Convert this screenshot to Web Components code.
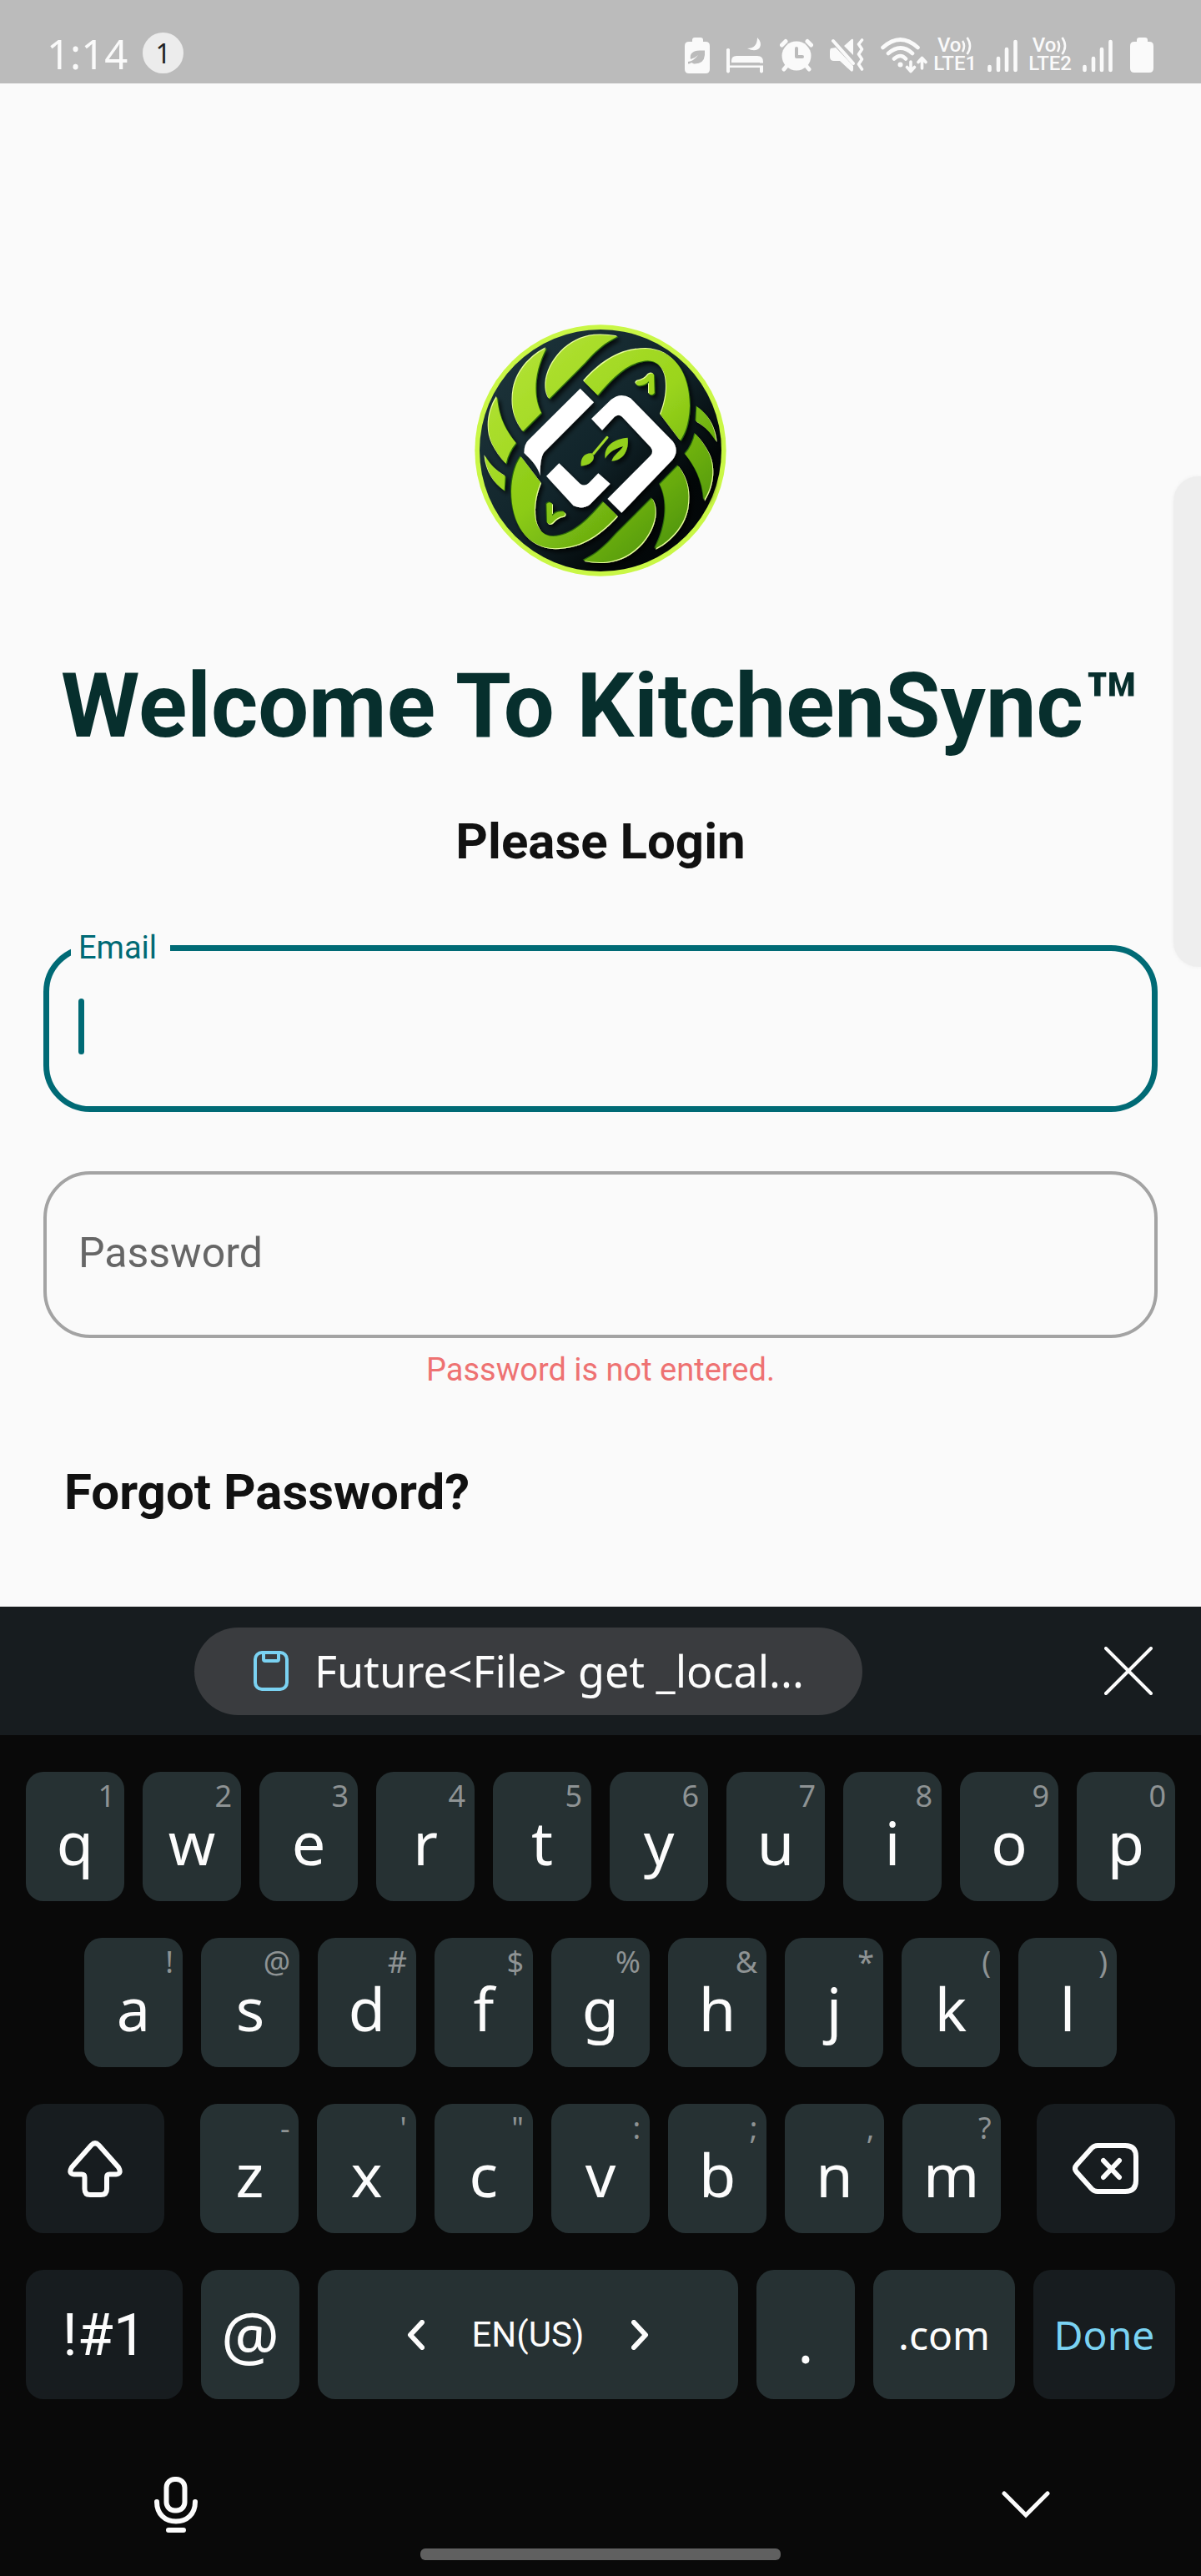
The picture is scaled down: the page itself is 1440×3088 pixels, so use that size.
<!DOCTYPE html>
<html lang="en">
<head>
<meta charset="utf-8">
<meta name="viewport" content="width=device-width, initial-scale=1">
<title>KitchenSync – Login</title>
<style>
  body { margin: 0; background: #fafafa; font-family: Roboto, "Liberation Sans", sans-serif; }
</style>
</head>
<body>
<login-screen></login-screen>

<script>
const define = (name, html, setup) => {
  const tpl = document.createElement('template');
  tpl.innerHTML = html;
  customElements.define(name, class extends HTMLElement {
    connectedCallback() {
      if (this.shadowRoot) return;
      const root = this.attachShadow({ mode: 'open' });
      root.append(tpl.content.cloneNode(true));
      if (setup) setup(this, root);
    }
  });
};

/* Network badge: VoLTE text plus a four-bar signal meter */
define('network-signal', `
<style>
  :host { display: flex; gap: 13px; align-items: flex-end; color: #fafafa; }
  .lte { font: 500 24px/23px Roboto, sans-serif; text-align: center; }
  .vo { display: flex; justify-content: center; align-items: center; gap: 1px; height: 21px; line-height: 21px; }
  svg { display: block; }
</style>
<div class="lte">
  <div class="vo"><span>Vo</span><svg width="13" height="22" viewBox="0 0 13 22" fill="none" stroke="currentColor" stroke-width="2.6"><path d="M1 5Q5 11 1 18M6.500 1Q13.500 11 6.500 21"/></svg></div>
  <div class="name"></div>
</div>
<svg width="36" height="42" viewBox="0 0 36 42" stroke="currentColor" stroke-width="4.6" stroke-linecap="round"><path d="M2.500 34V38M13 24V38M23 13V38M33.500 4V38"/></svg>
`, (el, root) => { root.querySelector('.name').textContent = el.getAttribute('label'); });

define('status-bar', `
<style>
  :host { display: flex; justify-content: space-between; align-items: flex-end; height: 100px; box-sizing: border-box; padding: 0 57px 12px 56px; background: #bbb; color: #fafafa; font-family: "Noto Sans", sans-serif; }
  .left, .right, .icons { display: flex; align-items: center; }
  .left { gap: 18px; }
  time { font-size: 49px; line-height: 46px; }
  .count { width: 49px; height: 49px; border-radius: 50%; background: #ececec; color: #222; font-size: 32px; line-height: 49px; text-align: center; }
  .icons { gap: 20px; }
  .right { gap: 7px; }
  .nets { display: flex; gap: 13px; }
  .batt { margin-left: 14px; }
  svg { display: block; }
</style>
<div class="left"><time>1:14</time><span class="count">1</span></div>
<div class="right">
  <div class="icons">
    <svg width="30" height="43" viewBox="0 0 30 43" fill="currentColor"><path d="M9 5V3q0-3 3-3h7q3 0 3 3v2h3q5 0 5 5v28q0 5-5 5H5q-5 0-5-5V10q0-5 5-5z"/><path fill="#bbb" d="M24 15.500V21Q23 32 11 31.500L8 30Q6 31.500 4 31.500V29Q11 28 16 21Q12 25 7 26Q5 16 18 15.500Z"/></svg>
    <svg width="44" height="43" viewBox="0 0 44 43" fill="currentColor"><path d="M0 14q2-2 4 0v18h36V30H6V28q0-6 6-6h25q7 0 7 7v12q-2 3-4 0v-5H4v5q-2 3-4 0z"/><path fill="#bbb" d="M4 30.500h40v3H4z"/><path d="M37 0q6 6 3 12-5 6-15 1 12 0 12-13z"/></svg>
    <svg width="40" height="40" viewBox="0 0 40 40"><g stroke="currentColor" stroke-width="5" stroke-linecap="round"><path d="M2.500 8 7 3.500M37.500 8 33 3.500M5 37l5-6M35 37l-5-6"/></g><circle cx="20" cy="21" r="17.500" fill="currentColor"/><path d="M20 12v10h7" fill="none" stroke="#bbb" stroke-width="4" stroke-linecap="round" stroke-linejoin="round"/></svg>
    <svg width="41" height="40" viewBox="0 0 41 40" fill="currentColor"><path d="M1 12l6-1 21 22v5q-1 3-3 1L12 27H5q-5 0-5-5v-6q0-3 1-4zM17 9 26 1q2-1 2 1v18z"/><path d="M4 3 28 30" stroke="currentColor" stroke-width="4" stroke-linecap="round"/><path fill="none" stroke="currentColor" stroke-width="3.600" stroke-linecap="round" stroke-linejoin="round" d="M38.500 2l-4 5 4 6-4 6 4 6-4 6 4 6"/></svg>
    <svg width="56" height="43" viewBox="0 0 56 43" fill="none" stroke="currentColor" stroke-width="4.600" stroke-linecap="round" stroke-linejoin="round"><path d="M2.500 12q21-19 42 0M9 19q15-13 29 0M16 25.500q8-7 14 0"/><circle cx="23.500" cy="32.500" r="3" fill="currentColor" stroke="none"/><path stroke-width="3.600" d="M36 29v11m-4.500-4.500L36 40.500l4.500-5M49.500 37V26M45 29.500l4.500-5 4.500 5"/></svg>
  </div>
  <div class="nets"><network-signal label="LTE1"></network-signal><network-signal label="LTE2"></network-signal></div>
  <svg class="batt" width="28" height="42" viewBox="0 0 28 42" fill="currentColor"><path d="M8 5V3q0-3 3-3h7q3 0 3 3v2h2q5 0 5 5v27q0 5-5 5H5q-5 0-5-5V10q0-5 5-5z"/></svg>
</div>`);

define('brand-logo', `
<style>
  :host { display: block; width: 302px; height: 302px; }
  svg { display: block; width: 100%; height: 100%; }
</style>
<svg viewBox="57 58 906 906" role="img" aria-label="KitchenSync logo">
  <defs>
    <linearGradient id="bg" x1="0" y1="0" x2="1" y2="1"><stop offset="0" stop-color="#1f373e"/><stop offset=".5" stop-color="#11242a"/><stop offset=".75" stop-color="#020607"/><stop offset="1" stop-color="#04090b"/></linearGradient>
    <linearGradient id="g" gradientUnits="userSpaceOnUse" x1="200" y1="150" x2="800" y2="850"><stop offset="0" stop-color="#b2e234"/><stop offset=".5" stop-color="#9bd51c"/><stop offset="1" stop-color="#5fa60c"/></linearGradient>
    <linearGradient id="g2" gradientUnits="userSpaceOnUse" x1="820" y1="860" x2="220" y2="160"><stop offset="0" stop-color="#a5db28"/><stop offset=".5" stop-color="#8ccb16"/><stop offset="1" stop-color="#4f950b"/></linearGradient>
    <filter id="f" x="-10%" y="-10%" width="125%" height="125%"><feDropShadow dx="9" dy="11" stdDeviation="8" flood-color="#000" flood-opacity=".75"/></filter>
    <g id="half">
      <path d="M313 270C320 190 395 104 490 96Q530 93 572 101C500 135 472 180 435 215L325 325C316 310 312 295 313 270Z"/>
      <path d="M315 143C270 165 212 215 197 290C187 350 198 398 231 442L297 375C268 320 268 235 315 143Z"/>
      <path d="M138 318C104 370 97 440 122 490Q142 530 170 558C176 530 188 505 206 484C170 440 143 390 138 318Z"/>
      <path d="M94 530C99 590 130 632 164 655L167 603C135 585 113 562 94 530Z"/>
      <path d="M450 262C525 180 590 146 675 145C775 149 830 230 831 350C829 400 820 440 797 475L726 382C747 330 752 280 742 240C730 205 710 190 680 188C615 192 565 235 500 312Z"/>
      <path d="M682 238Q692 229 702 237L704 304Q694 316 684 306V262Q668 280 643 277Q631 269 643 261Q668 258 682 238Z"/>
    </g>
  </defs>
  <circle cx="510" cy="511" r="452" fill="#c9f746"/>
  <circle cx="510" cy="511" r="435" fill="url(#bg)"/>
  <g fill="#fff" filter="url(#f)">
    <path d="M437 288 486 338 308 516Q292 536 293 602C285 570 262 545 235 520Q235 488 250 474Z"/>
    <path d="M361 557 436 630Q452 642 468 628L502 593 545 631 472 705Q445 725 413 710L315 603Z"/>
    <path d="M477 397 548 328Q582 300 618 323L770 478Q794 511 770 543L586 735 535 685 690 529Q702 515 690 499L588 390Q576 378 560 390L516 438Z"/>
  </g>
  <g filter="url(#f)">
    <g fill="#e9ff9d" transform="translate(-3 -3)"><use href="#half"/><use href="#half" transform="rotate(180 513 507)"/></g>
    <g fill="#2c6a0b" transform="translate(3 3)"><use href="#half"/><use href="#half" transform="rotate(180 507 501)"/></g>
    <use href="#half" fill="url(#g)"/>
    <use href="#half" fill="url(#g2)" transform="rotate(180 510 504)"/>
    <path d="M534 464 485 522" stroke="#a5dc2b" stroke-width="9" stroke-linecap="round"/>
    <g fill="#93d01f"><path d="M440 567C437 540 450 520 478 521C494 530 486 564 440 567Z"/><path d="M527 540C520 495 560 468 608 465C613 512 590 547 550 549C556 528 580 515 592 496C560 504 540 518 527 540Z"/></g>
  </g>
</svg>`);

/* Outlined field. With "floating" the label sits in the border notch. */
const fieldCss = `
<style>
  :host { display: block; }
  fieldset { margin: 0; min-width: 0; box-sizing: border-box; border-radius: 56px; }
  input { border: 0; outline: 0; background: none; padding: 0; min-width: 0; width: 100%; color: #222; caret-color: transparent; font: 50px/60px Roboto, sans-serif; }
  .active { border: 7px solid #006a75; padding: 0 26px 24px; }
  legend { padding: 0 16px 0 9px; font-size: 38px; line-height: 45px; color: #006a75; }
  .row { display: flex; align-items: center; height: 143px; padding-left: 9px; }
  .caret { flex: none; width: 7px; height: 67px; border-radius: 4px; background: #006a75; }
  .idle { border: 4px solid #a3a3a3; height: 200px; padding: 0 38px 4px; display: grid; align-items: center; }
  .idle > * { grid-area: 1 / 1; }
  .idle label { font-size: 50px; line-height: 60px; color: #666; }
</style>`;
customElements.define('text-field', class extends HTMLElement {
  connectedCallback() {
    const root = this.attachShadow({ mode: 'open' });
    const label = this.getAttribute('label'), type = this.getAttribute('type');
    root.innerHTML = fieldCss + (this.hasAttribute('floating')
      ? `<fieldset class="active"><legend><label for="i">${label}</label></legend><div class="row"><span class="caret"></span><input id="i" type="${type}"></div></fieldset>`
      : `<fieldset class="idle"><label for="i">${label}</label><input id="i" type="${type}"></fieldset>`);
  }
});

define('key-row', `
<style>
  :host { display: flex; gap: 22px; }
  :host([inset]) { padding: 0 70px; }
</style><slot></slot>`);

customElements.define('key-cap', class extends HTMLElement {
  connectedCallback() {
    const root = this.attachShadow({ mode: 'open' });
    const hint = this.getAttribute('hint');
    root.innerHTML = `
<style>
  :host { display: block; flex: 118 1 0; min-width: 0; }
  :host([wide]) { flex-grow: 166; }
  :host([wide="start"]) { margin-right: 21px; }
  :host([wide="end"]) { margin-left: 21px; }
  :host([size="mode"]) { flex-grow: 188; }
  :host([size="word"]) { flex-grow: 170; }
  :host([size="space"]) { flex-grow: 504; }
  button { position: relative; display: flex; align-items: center; justify-content: center; width: 100%; height: 155px; border: 0; margin: 0; padding: 0; border-radius: 21px; background: #263133; color: #fcfcfc; font: 72px/90px "Noto Sans", sans-serif; }
  :host([letter]) button { padding-top: 12px; }
  :host([dark]) button { background: #171c1f; }
  :host([size="mode"]) button { font: 70px/90px Roboto, sans-serif; }
  :host([size="at"]) button { font-size: 78px; }
  :host([size="word"]) button { font-size: 48px; }
  :host([accent]) button { color: #7ad2f2; }
  :host([size="space"]) button { gap: 56px; font: 42px/50px Roboto, sans-serif; }
  .hint { position: absolute; top: 9px; right: 11px; font-size: 36px; line-height: 40px; color: #8e9394; }
</style>
<button type="button"><slot></slot>${hint ? '<span class="hint"></span>' : ''}</button>`;
    if (hint) root.querySelector('.hint').textContent = hint;
  }
});

define('clipboard-bar', `
<style>
  :host { display: flex; align-items: center; justify-content: space-between; height: 154px; box-sizing: border-box; padding: 0 58px 0 233px; background: #171c1f; }
  button { border: 0; margin: 0; padding: 0; background: none; color: #fcfcfc; display: flex; align-items: center; }
  .clip { width: 801px; height: 105px; box-sizing: border-box; padding: 0 60px 0 71px; gap: 31px; border-radius: 53px; background: #3a3c3f; font: 52px/70px "Noto Sans", sans-serif; white-space: nowrap; }
  svg { display: block; flex: none; }
</style>
<button type="button" class="clip"><svg width="42" height="48" viewBox="0 0 42 48" fill="none" stroke="#7ad2f2" stroke-width="4"><rect x="2" y="2" width="38" height="44" rx="8"/><path d="M12 3v7q0 2 2 2h14q2 0 2-2V3"/></svg><span>Future&lt;File&gt; get _local...</span></button>
<button type="button" aria-label="Close"><svg width="58" height="58" viewBox="0 0 58 58" stroke="currentColor" stroke-width="4" stroke-linecap="round"><path d="M2 2 56 56M56 2 2 56"/></svg></button>`);

const letters = (chars, hints) => [...chars].map((c, i) =>
  `<key-cap letter hint="${hints[i].replace('&', '&amp;').replace('"', '&quot;')}">${c}</key-cap>`).join('');

define('soft-keyboard', `
<style>
  :host { display: block; background: #090909; color: #fcfcfc; }
  .keys { display: grid; gap: 44px; padding: 44px 31px 0; }
  .tools { display: flex; justify-content: space-between; align-items: center; padding: 93px 181px 0 185px; }
  .tools button { border: 0; margin: 0; padding: 0; background: none; color: inherit; }
  svg { display: block; fill: none; stroke: currentColor; stroke-width: 6; stroke-linecap: round; stroke-linejoin: round; }
  .home { width: 30%; height: 14px; margin: 18px auto 0; border-radius: 6px; background: #606060; }
  .end { height: 19px; }
</style>
<clipboard-bar></clipboard-bar>
<div class="keys">
  <key-row>${letters('qwertyuiop', '1234567890')}</key-row>
  <key-row inset>${letters('asdfghjkl', '!@#$%&*()')}</key-row>
  <key-row>
    <key-cap wide="start" dark><svg aria-label="Shift" width="66" height="68" viewBox="0 0 66 68"><path d="M28.500 5.500Q33 1 37.500 5.500L61 32Q65.500 40 58 40.500H50Q47 40.500 47 44V58Q47 65 40 65H27Q20.500 65 20.500 58V44Q20.500 40.500 17 40.500H8Q0.500 40 5 32Z"/></svg></key-cap>
    ${letters('zxcvbnm', `-'":;,?`)}
    <key-cap wide="end" dark><svg aria-label="Delete" width="79" height="61" viewBox="0 0 79 61"><path d="M30 3H63Q76 3 76 16V45Q76 58 63 58H30Q26 58 23 55L5 35Q1 30.500 5 26L23 6Q26 3 30 3ZM37 21 56 41M56 21 37 41"/></svg></key-cap>
  </key-row>
  <key-row>
    <key-cap size="mode" dark>!#1</key-cap>
    <key-cap size="at">@</key-cap>
    <key-cap size="space"><svg width="21" height="36" viewBox="0 0 21 36"><path d="M18 3 4 18 18 33"/></svg><span>EN(US)</span><svg width="21" height="36" viewBox="0 0 21 36"><path d="M3 3 17 18 3 33"/></svg></key-cap>
    <key-cap letter>.</key-cap>
    <key-cap size="word">.com</key-cap>
    <key-cap size="word" dark accent>Done</key-cap>
  </key-row>
</div>
<div class="tools">
  <button type="button" aria-label="Voice input"><svg width="52" height="68" viewBox="0 0 52 68"><rect x="14.500" y="3" width="22" height="37.500" rx="10"/><path d="M3 30C3 45 13 53.500 26 53.500S49 45 49 30M17 64H35"/></svg></button>
  <button type="button" aria-label="Hide keyboard"><svg width="58" height="34" viewBox="0 0 58 34" style="stroke-width:5;stroke-linejoin:miter"><path d="M3 3 29 29 55 3"/></svg></button>
</div>
<div class="home"></div><div class="end"></div>`);

define('login-screen', `
<style>
  :host { display: flex; flex-direction: column; min-height: 100vh; background: #fafafa; position: relative; }
  main { flex: 1; display: flex; flex-direction: column; padding: 289px 52px 0; color: #111; }
  brand-logo { align-self: center; }
  h1, h2, p { margin: 0; text-align: center; }
  h1 { margin: 93px -52px 0; font-size: 108px; line-height: 124px; color: #072f2d; white-space: nowrap; }
  h2 { margin-top: 66px; font-size: 60px; line-height: 70px; }
  .email { margin-top: 70px; }
  .password { margin-top: 71px; }
  p { margin-top: 16px; font-size: 38px; line-height: 44px; color: #ee7272; }
  a { align-self: flex-start; margin: 90px 25px 102px; font-size: 60px; line-height: 70px; font-weight: 700; color: inherit; text-decoration: none; }
  .edge { position: absolute; right: 0; top: 571px; width: 33px; height: 588px; border-radius: 30px 0 0 30px; background: #eee; box-shadow: 0 0 4px #eee; }
</style>
<status-bar></status-bar>
<main>
  <brand-logo></brand-logo>
  <h1>Welcome To KitchenSync™</h1>
  <h2>Please Login</h2>
  <text-field class="email" label="Email" type="email" floating></text-field>
  <text-field class="password" label="Password" type="password"></text-field>
  <p>Password is not entered.</p>
  <a href="#forgot">Forgot Password?</a>
</main>
<div class="edge"></div>
<soft-keyboard></soft-keyboard>`);
</script>
</body>
</html>
